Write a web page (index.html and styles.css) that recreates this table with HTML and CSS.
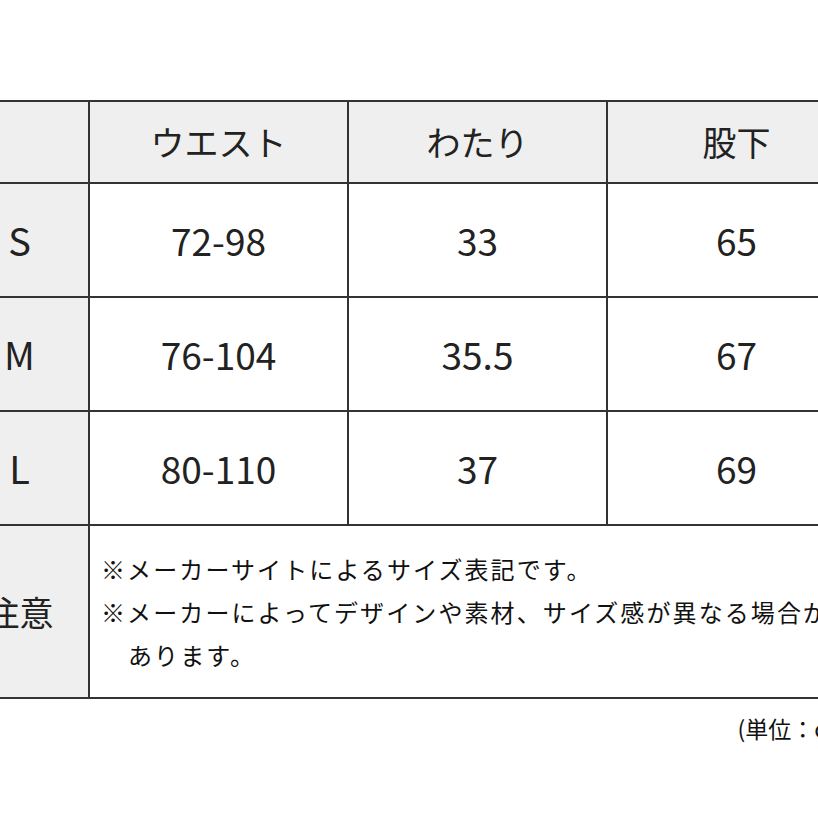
FILE: index.html
```html
<!DOCTYPE html>
<html lang="ja">
<head>
<meta charset="utf-8">
<link rel="stylesheet" href="styles.css">
</head>
<body>
<div class="page">
  <table class="size-table">
    <colgroup>
      <col class="c-label">
      <col class="c-val">
      <col class="c-val">
      <col class="c-val">
    </colgroup>
    <tr class="head">
      <th class="corner"></th>
      <th>ウエスト</th>
      <th>わたり</th>
      <th>股下</th>
    </tr>
    <tr class="row">
      <th class="label">S</th>
      <td>72-98</td>
      <td>33</td>
      <td>65</td>
    </tr>
    <tr class="row">
      <th class="label">M</th>
      <td>76-104</td>
      <td>35.5</td>
      <td>67</td>
    </tr>
    <tr class="row">
      <th class="label">L</th>
      <td>80-110</td>
      <td>37</td>
      <td>69</td>
    </tr>
    <tr class="notes">
      <th class="label jp">注意</th>
      <td colspan="3" class="note-cell">
        <p class="note">※メーカーサイトによるサイズ表記です。</p>
        <p class="note">※メーカーによってデザインや素材、サイズ感が異なる場合が<br>あります。</p>
      </td>
    </tr>
  </table>
  <div class="unit">(単位：cm)</div>
</div>
</body>
</html>
```

FILE: styles.css
```css
html, body {
  margin: 0;
  padding: 0;
  background: #ffffff;
  overflow: hidden;
}

body {
  width: 818px;
  height: 818px;
  font-family: "Noto Sans CJK JP", "Noto Sans", sans-serif;
  color: #222222;
}

.page {
  margin-left: -51px;
  padding-top: 100px;
  width: 916px;
}

.size-table {
  border-collapse: collapse;
  table-layout: fixed;
  width: 916px;
}

.c-label { width: 139px; }
.c-val { width: 259px; }

.size-table th,
.size-table td {
  border: 2px solid #333333;
  text-align: center;
  vertical-align: middle;
  padding: 0;
  font-weight: 400;
}

.head th {
  background: #efefef;
  height: 80px;
  font-size: 34px;
  line-height: 1;
}

.label {
  background: #efefef;
  font-size: 38px;
  line-height: 1;
}

.size-table .label.jp {
  font-size: 34px;
}

.row td {
  background: #ffffff;
  font-size: 37px;
  line-height: 1;
}

.row th,
.row td {
  height: 112px;
}

.notes th,
.notes td {
  height: 171px;
}

.size-table .note-cell {
  text-align: left;
  background: #ffffff;
  padding: 0 0 0 11px;
}

.note {
  margin: 0;
  font-size: 24px;
  line-height: 43px;
  letter-spacing: 2.1px;
  color: #111111;
  padding-left: 27px;
  text-indent: -27px;
  white-space: nowrap;
}

.unit {
  text-align: right;
  padding-right: 10px;
  margin-top: 14px;
  font-size: 23px;
  line-height: 30px;
  color: #111111;
}
```
